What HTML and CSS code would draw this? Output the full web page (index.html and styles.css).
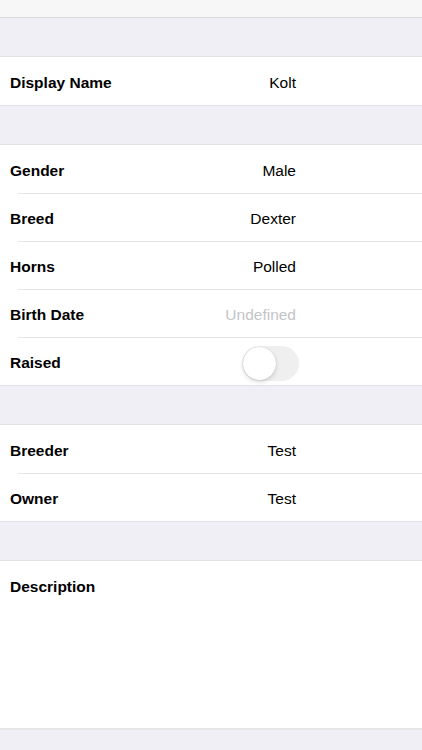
FILE: index.html
```html
<!doctype html>
<html lang="en-us">

<head>
  <meta charset="utf-8">
  <title>Animal</title>
  <link rel="stylesheet" href="styles.css">
</head>

<body>
  <div id="topbar"></div>

  <div class="gap"></div>
  <div class="group">
    <div class="row"><span class="label">Display Name</span><span class="value">Kolt</span></div>
  </div>

  <div class="gap"></div>
  <div class="group">
    <div class="row"><span class="label">Gender</span><span class="value">Male</span></div>
    <div class="row"><span class="label">Breed</span><span class="value">Dexter</span></div>
    <div class="row"><span class="label">Horns</span><span class="value">Polled</span></div>
    <div class="row"><span class="label">Birth Date</span><span class="value empty">Undefined</span></div>
    <div class="row">
      <span class="label">Raised</span>
      <span class="toggle"><span class="knob"></span></span>
    </div>
  </div>

  <div class="gap"></div>
  <div class="group">
    <div class="row"><span class="label">Breeder</span><span class="value">Test</span></div>
    <div class="row"><span class="label">Owner</span><span class="value">Test</span></div>
  </div>

  <div class="gap"></div>
  <div class="group desc">
    <div class="row"><span class="label">Description</span></div>
  </div>

  <div class="gap bottom"></div>
</body>

</html>
```

FILE: styles.css
```css
body,
html {
  margin: 0;
  padding: 0;
  height: 750px;
  overflow: hidden;
  background: #f0eff5;
  font-family: "Liberation Sans", Arial, Helvetica, sans-serif;
  color: #000;
}

#topbar {
  height: 17px;
  background: #f7f7f7;
  border-bottom: 1px solid #dcdcdf;
}

.gap {
  height: 38px;
  background: #f0eff5;
}

.bottom {
  height: 40px;
}

.group {
  background: #fff;
  border-top: 1px solid #e2e2e6;
  border-bottom: 1px solid #e2e2e6;
}

.row {
  position: relative;
  height: 48px;
  display: flex;
  align-items: center;
  padding: 4px 0 0 10px;
  box-sizing: border-box;
}

.row + .row::before {
  content: "";
  position: absolute;
  top: 0;
  left: 18px;
  right: 0;
  border-top: 1px solid #e6e6ea;
}

.label {
  width: 126px;
  font-weight: bold;
  font-size: 15.5px;
}

.value {
  width: 160px;
  text-align: right;
  font-size: 15.5px;
}

.empty {
  color: #c4c4c8;
}

.toggle {
  margin-left: 106px;
  width: 57px;
  height: 35px;
  border-radius: 18px;
  background: #efefef;
  position: relative;
}

.knob {
  position: absolute;
  left: 1px;
  top: 1px;
  width: 33px;
  height: 33px;
  border-radius: 50%;
  background: #fff;
  box-shadow: 0 2px 4px rgba(0, 0, 0, .15), 0 0 1px rgba(0, 0, 0, .2);
}

.desc .row {
  height: 167px;
  align-items: flex-start;
  padding-top: 17px;
}

.desc {
  border-bottom: 2px solid #e6e6e6;
}
```
